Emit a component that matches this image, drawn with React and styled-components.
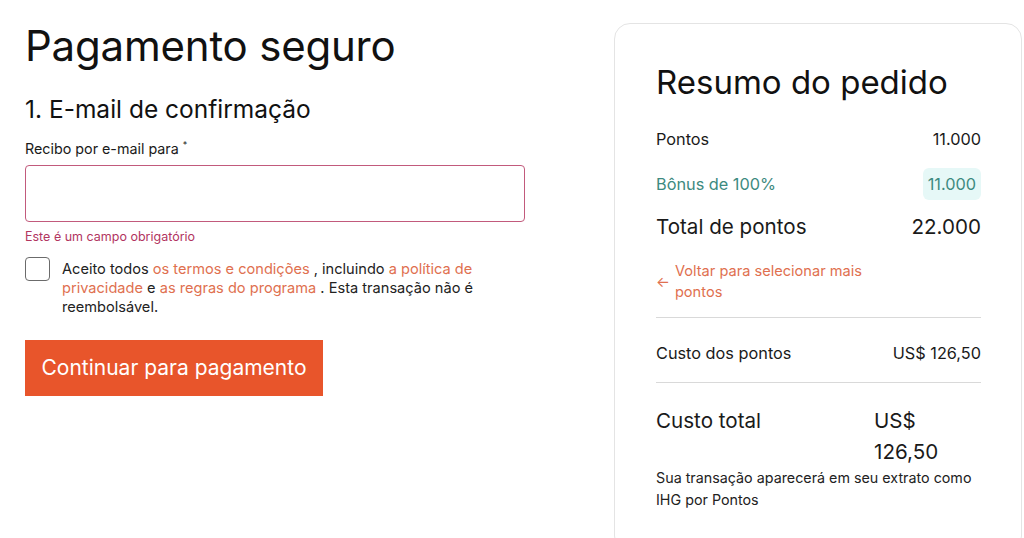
import React from 'react';
import styled, { createGlobalStyle } from 'styled-components';

const GlobalStyle = createGlobalStyle`
  body {
    margin: 0;
    background: #fff;
    font-family: Inter, "Noto Sans", sans-serif;
    color: #1a1a1a;
  }
`;

const Page = styled.div`
  display: flex;
  align-items: flex-start;
  padding: 0 2px 0 25px;
  height: 538px;
  overflow: hidden;
`;

const Checkout = styled.div`
  width: 500px;
  padding-top: 21px;
  h1 {
    margin: 0;
    font-size: 42px;
    font-weight: 400;
    line-height: 50px;
    letter-spacing: -0.2px;
    color: #111;
  }
  h2 {
    margin: 22px 0 0;
    font-size: 24.5px;
    font-weight: 400;
    line-height: 32px;
    color: #111;
  }
`;

const Label = styled.label`
  display: block;
  margin-top: 11px;
  font-size: 14.3px;
  line-height: 18px;
  sup {
    font-size: 9px;
  }
`;

const Input = styled.input`
  box-sizing: border-box;
  display: block;
  width: 500px;
  height: 57px;
  margin-top: 7px;
  border: 1px solid #c25a7c;
  border-radius: 4px;
  outline: none;
`;

const ErrorText = styled.div`
  margin-top: 7px;
  font-size: 12.5px;
  line-height: 16px;
  color: #b2355f;
`;

const Agree = styled.div`
  display: flex;
  gap: 12px;
  margin-top: 12px;
  font-size: 14.6px;
  line-height: 19px;
  color: #222;
  a {
    color: #e0704f;
    text-decoration: none;
  }
`;

const AgreeText = styled.p`
  margin: 3px 0 0;
`;

const Box = styled.div`
  flex-shrink: 0;
  width: 25px;
  height: 24px;
  border: 1.5px solid #6b6b6b;
  border-radius: 4px;
  box-sizing: border-box;
`;

const PayButton = styled.button`
  margin-top: 23px;
  width: 298px;
  height: 56px;
  border: none;
  background: #e8552b;
  color: #fff;
  font-family: inherit;
  font-size: 21px;
  cursor: pointer;
`;

const Card = styled.div`
  box-sizing: border-box;
  width: 408px;
  margin: 23px 0 0 auto;
  padding: 38px 40px 40px 41px;
  border: 1px solid #e4e4e4;
  border-radius: 16px;
  h3 {
    margin: 0 0 14px;
    font-size: 33px;
    font-weight: 400;
    line-height: 40px;
    color: #111;
  }
`;

const Row = styled.div`
  display: flex;
  justify-content: space-between;
  align-items: ${(p) => (p.top ? 'flex-start' : 'center')};
  min-height: ${(p) => p.h || 46}px;
  font-size: ${(p) => (p.big ? 20.6 : 16.3)}px;
  line-height: ${(p) => (p.big ? 31 : 22)}px;
  color: ${(p) => (p.teal ? '#3d8a80' : '#1a1a1a')};
`;

const Chip = styled.span`
  padding: 5px 5px;
  border-radius: 6px;
  background: #e6f8f7;
`;

const TotalValue = styled.span`
  width: 107px;
  flex-shrink: 0;
`;

const BackLink = styled.a`
  display: flex;
  align-items: center;
  gap: 5px;
  margin-top: 13px;
  padding-bottom: 14px;
  border-bottom: 1px solid #d9d9d9;
  font-size: 14.6px;
  line-height: 21px;
  color: #e0704f;
  text-decoration: none;
  span {
    width: 200px;
  }
`;

const CostRow = styled(Row)`
  padding: 13px 0 7px;
  border-bottom: 1px solid #d9d9d9;
`;

const Note = styled.p`
  margin: 0;
  font-size: 14.3px;
  line-height: 22px;
  color: #222;
`;

export default function App() {
  return (
    <>
      <GlobalStyle />
      <Page>
        <Checkout>
          <h1>Pagamento seguro</h1>
          <h2>1. E-mail de confirmação</h2>
          <Label htmlFor="email">
            Recibo por e-mail para <sup>*</sup>
          </Label>
          <Input id="email" type="email" />
          <ErrorText>Este é um campo obrigatório</ErrorText>
          <Agree>
            <Box />
            <AgreeText>
              Aceito todos <a href="#">os termos e condições</a> , incluindo{' '}
              <a href="#">a política de privacidade</a> e{' '}
              <a href="#">as regras do programa</a> . Esta transação não é reembolsável.
            </AgreeText>
          </Agree>
          <PayButton>Continuar para pagamento</PayButton>
        </Checkout>
        <Card>
          <h3>Resumo do pedido</h3>
          <Row>
            <span>Pontos</span>
            <span>11.000</span>
          </Row>
          <Row teal h={43}>
            <span>Bônus de 100%</span>
            <Chip>11.000</Chip>
          </Row>
          <Row big h={43}>
            <span>Total de pontos</span>
            <span>22.000</span>
          </Row>
          <BackLink href="#">
            ←<span>Voltar para selecionar mais pontos</span>
          </BackLink>
          <CostRow h={44}>
            <span>Custo dos pontos</span>
            <span>US$ 126,50</span>
          </CostRow>
          <Row big top h={62} style={{ marginTop: 22 }}>
            <span>Custo total</span>
            <TotalValue>US$ 126,50</TotalValue>
          </Row>
          <Note>Sua transação aparecerá em seu extrato como IHG por Pontos</Note>
        </Card>
      </Page>
    </>
  );
}
